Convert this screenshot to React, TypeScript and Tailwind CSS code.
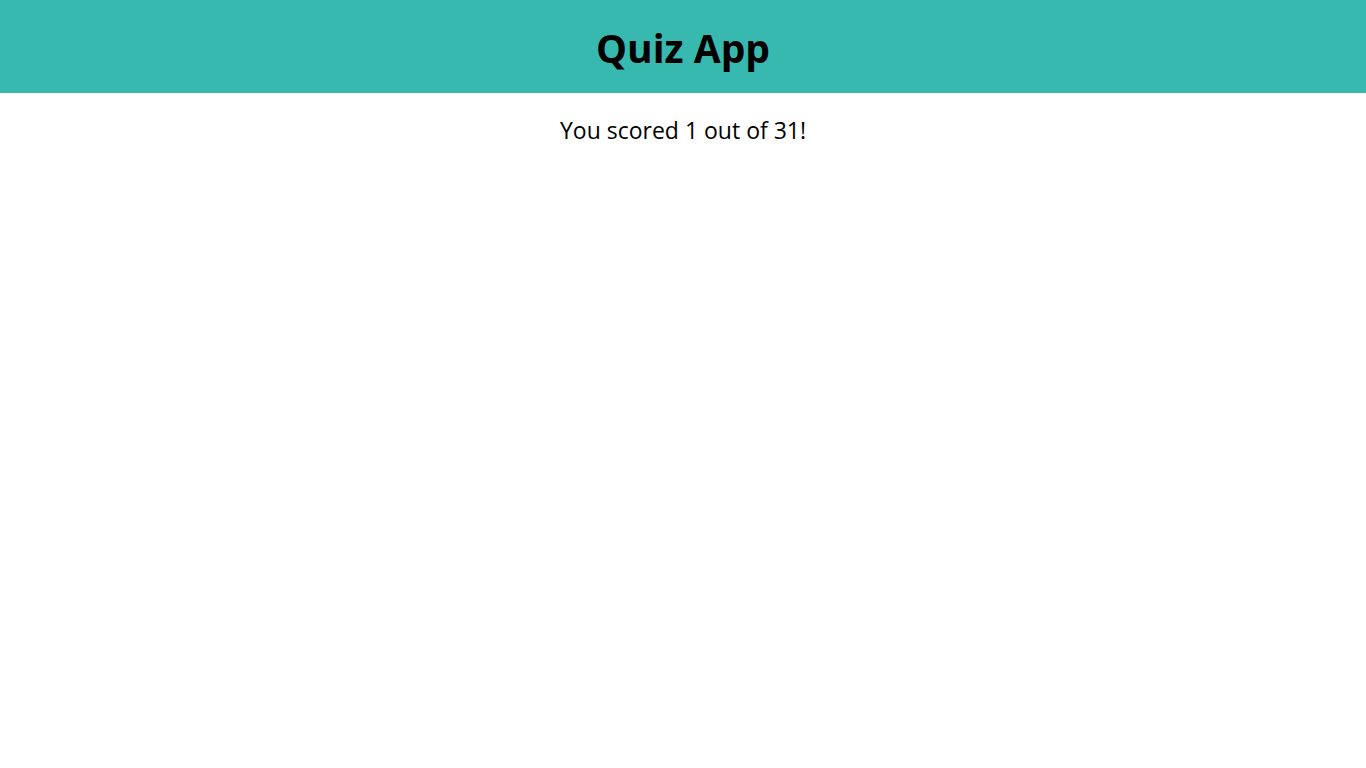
export default function App() {
  return (
    <div className="min-h-screen bg-white" style={{ fontFamily: '"Open Sans", "Noto Sans", sans-serif' }}>
      <header className="h-[93px] bg-[#38b9b0] flex items-center justify-center">
        <h1 className="text-[39px] font-bold text-black leading-none mt-[2px]">Quiz App</h1>
      </header>
      <p className="text-center text-[23px] text-black mt-[26px] leading-none">You scored 1 out of 31!</p>
    </div>
  );
}
